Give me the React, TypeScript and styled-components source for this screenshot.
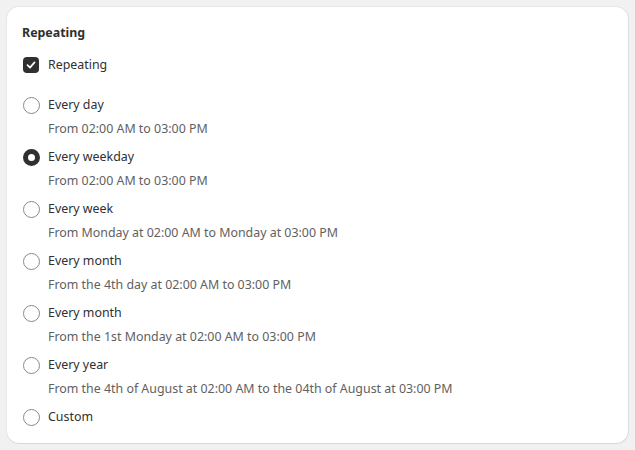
import React from "react";
import styled, { createGlobalStyle } from "styled-components";

const Global = createGlobalStyle`
  html, body { margin: 0; padding: 0; background: #f1f1f1; }
  body { font-family: "Noto Sans", "Open Sans", sans-serif; color: #303030; }
`;

const Page = styled.div`
  padding: 7px;
`;

const Card = styled.section`
  background: #fff;
  border-radius: 12px;
  padding: 16px 16px 16px 15px;
  box-shadow: 0 1px 0 0 rgba(26, 26, 26, 0.07), 1px 0 0 0 rgba(0,0,0,0.04), 0 0 0 1px rgba(0,0,0,0.04);
  display: flex;
  flex-direction: column;
`;

const Title = styled.h2`
  margin: 0;
  font-size: 12.4px;
  font-weight: 700;
  line-height: 20px;
  color: #303030;
`;

const Row = styled.label`
  display: flex;
  align-items: center;
  gap: 8px;
  height: 20px;
  font-size: 12.4px;
  line-height: 20px;
  color: #303030;
`;

const CheckRow = styled(Row)`
  margin-top: 12px;
  margin-left: 1px;
  gap: 9px;
`;

const Box = styled.span`
  width: 16px;
  height: 16px;
  border-radius: 4px;
  background: #303030;
  display: flex;
  align-items: center;
  justify-content: center;
`;

const List = styled.div`
  margin-top: 20px;
  display: flex;
  flex-direction: column;
  gap: 8px;
`;

const Option = styled.div`
  display: flex;
  flex-direction: column;
  gap: 4px;
`;

const Radio = styled.span<{ $on?: boolean }>`
  box-sizing: border-box;
  width: 17px;
  height: 17px;
  margin-left: 1px;
  border-radius: 50%;
  border: ${(p) => (p.$on ? "5px solid #303030" : "1px solid #8a8a8a")};
  background: #fff;
  flex: none;
`;

const Help = styled.div`
  font-size: 12.4px;
  line-height: 20px;
  color: #616161;
  padding-left: 26px;
`;

const options: { label: string; help?: string; on?: boolean }[] = [
  { label: "Every day", help: "From 02:00 AM to 03:00 PM" },
  { label: "Every weekday", help: "From 02:00 AM to 03:00 PM", on: true },
  { label: "Every week", help: "From Monday at 02:00 AM to Monday at 03:00 PM" },
  { label: "Every month", help: "From the 4th day at 02:00 AM to 03:00 PM" },
  { label: "Every month", help: "From the 1st Monday at 02:00 AM to 03:00 PM" },
  { label: "Every year", help: "From the 4th of August at 02:00 AM to the 04th of August at 03:00 PM" },
  { label: "Custom" },
];

export default function App() {
  return (
    <>
      <Global />
      <Page>
        <Card>
          <Title>Repeating</Title>
          <CheckRow>
            <Box>
              <svg width="10" height="10" viewBox="0 0 10 10" fill="none">
                <path d="M1.5 5.2 L4 7.6 L8.5 2.4" stroke="#fff" strokeWidth="1.7" strokeLinecap="round" strokeLinejoin="round" />
              </svg>
            </Box>
            Repeating
          </CheckRow>
          <List>
            {options.map((o, i) => (
              <Option key={i}>
                <Row>
                  <Radio $on={o.on} />
                  {o.label}
                </Row>
                {o.help && <Help>{o.help}</Help>}
              </Option>
            ))}
          </List>
        </Card>
      </Page>
    </>
  );
}
